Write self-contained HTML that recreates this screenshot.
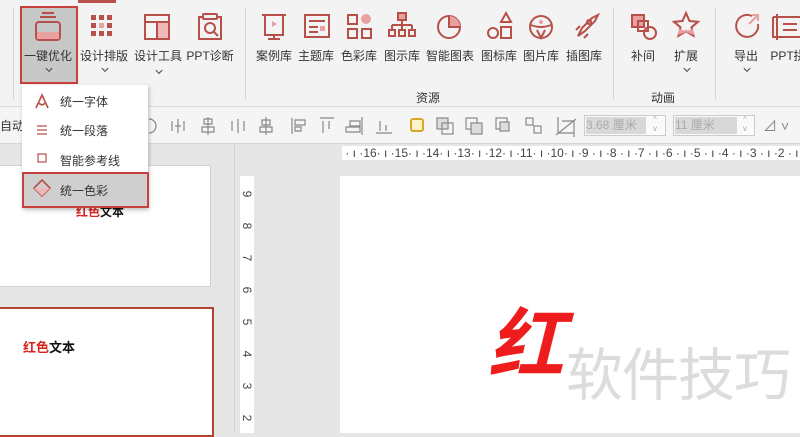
<!DOCTYPE html>
<html><head><meta charset="utf-8"><style>
*{margin:0;padding:0;box-sizing:border-box}
body{width:800px;height:433px;overflow:hidden;position:relative;background:#e6e6e6;font-family:"Liberation Sans","Noto Sans CJK SC",sans-serif;color:#333}
.a{position:absolute}
.lbl{position:absolute;font-size:12px;white-space:nowrap;transform:translateX(-50%);top:47px;color:#333}
.chev{position:absolute;width:5px;height:5px;border-right:1.3px solid #444;border-bottom:1.3px solid #444;transform:translateX(-50%) rotate(45deg);top:66px}
.sep{position:absolute;width:1px;background:#d6d6d6;top:8px;height:92px}
</style></head><body>
<!-- ribbon -->
<div class="a" style="left:0;top:0;width:800px;height:107px;background:#f3f3f3;border-bottom:1px solid #dcdcdc"></div>
<div class="a" style="left:78px;top:0;width:38px;height:3px;background:#b8504a"></div>
<div class="sep" style="left:13px"></div>
<div class="a" style="left:20px;top:6px;width:58px;height:78px;background:#c8c8c8;border:2px solid #c9403c"></div>
<div class="sep" style="left:245px"></div>
<div class="sep" style="left:613px"></div>
<div class="sep" style="left:715px"></div>

<svg class="a" style="left:0;top:0" width="800" height="107" fill="none" stroke="#b8504a" stroke-width="2">
<rect x="36" y="22" width="24" height="18" rx="3"/><line x1="40" y1="17" x2="56" y2="17"/><line x1="42" y1="13" x2="54" y2="13"/><rect x="37" y="32" width="22" height="7" fill="#e8a0a0" stroke="none"/>
<g fill="#b8504a" stroke="none"><rect x="91" y="15" width="5" height="5"/><rect x="99" y="15" width="5" height="5"/><rect x="107" y="15" width="5" height="5"/><rect x="91" y="23" width="5" height="5"/><rect x="99" y="23" width="5" height="5" fill="#e8a0a0"/><rect x="107" y="23" width="5" height="5"/><rect x="91" y="31" width="5" height="5"/><rect x="99" y="31" width="5" height="5"/><rect x="107" y="31" width="5" height="5"/></g>
<rect x="145" y="15" width="24" height="24"/><line x1="145" y1="22" x2="169" y2="22"/><line x1="157" y1="22" x2="157" y2="39"/><rect x="158" y="23" width="10" height="15" fill="#f0b8b8" stroke="none"/>
<path d="M202 17h-3v22h22v-22h-3"/><rect x="203" y="14" width="14" height="5" rx="1"/><circle cx="210" cy="28" r="5"/><line x1="214" y1="32" x2="218" y2="36"/>
<path d="M262 15h24M265 15v20h18v-20M274 35v4M268 39h12"/><path d="M272 21l5 3-5 3z" fill="#e8a0a0" stroke="none"/>
<rect x="305" y="15" width="24" height="22"/><line x1="309" y1="21" x2="325" y2="21"/><line x1="309" y1="27" x2="318" y2="27"/><line x1="309" y1="32" x2="318" y2="32"/><rect x="320" y="26" width="5" height="5" fill="#e8a0a0" stroke="none"/>
<rect x="348" y="15" width="9" height="9"/><circle cx="366" cy="19" r="5" fill="#e8a0a0" stroke="none"/><rect x="348" y="29" width="9" height="9"/><rect x="362" y="29" width="9" height="9"/>
<rect x="398" y="13" width="8" height="7" fill="#e8a0a0"/><path d="M402 20v5M392 25h20M392 25v4M412 25v4M402 25v4"/><rect x="389" y="30" width="6" height="6"/><rect x="399" y="30" width="6" height="6"/><rect x="409" y="30" width="6" height="6"/>
<circle cx="449" cy="27" r="11"/><path d="M449 16v11h11" /><path d="M450 16a11 11 0 0 1 10 10h-10z" fill="#e8a0a0" stroke="none"/>
<circle cx="493" cy="33" r="5"/><rect x="501" y="27" width="10" height="11"/><path d="M506 13l5 9h-10z"/>
<circle cx="541" cy="27" r="11"/><path d="M531 25q10 4 20 0M537 30l4 8 4-8"/><circle cx="541" cy="22" r="2" fill="#e8a0a0" stroke="none"/>
<path d="M578 36l4-8 10-10 6-3-3 6-10 10zM576 30l4-4M584 38l4-4"/><circle cx="589" cy="22" r="2"/>
<rect x="632" y="15" width="12" height="12" fill="#e8a0a0"/><rect x="638" y="21" width="10" height="10"/><circle cx="650" cy="33" r="6"/>
<path d="M686 13l3.5 8 8.5 .8-6.5 5.5 2 8.5-7.5-4.5-7.5 4.5 2-8.5-6.5-5.5 8.5-.8z"/><path d="M679 29l7 2 7-2 1 6-8-3-8 3z" fill="#e8a0a0" stroke="none"/>
<path d="M752 16a11 11 0 1 0 6 8"/><path d="M749 24l9-9M752 15h6v6" stroke="#e8a0a0"/>
<path d="M773 17h30M773 17v20h30M777 14v26M783 24h14M783 30h14"/>
</svg>

<div class="lbl" style="left:48px">一键优化</div><div class="chev" style="left:49px"></div>
<div class="lbl" style="left:104px">设计排版</div><div class="chev" style="left:105px"></div>
<div class="lbl" style="left:158px">设计工具</div><div class="chev" style="left:159px;top:68px"></div>
<div class="lbl" style="left:210px">PPT诊断</div>
<div class="lbl" style="left:274px">案例库</div>
<div class="lbl" style="left:316px">主题库</div>
<div class="lbl" style="left:359px">色彩库</div>
<div class="lbl" style="left:402px">图示库</div>
<div class="lbl" style="left:450px">智能图表</div>
<div class="lbl" style="left:499px">图标库</div>
<div class="lbl" style="left:541px">图片库</div>
<div class="lbl" style="left:584px">插图库</div>
<div class="lbl" style="left:643px">补间</div>
<div class="lbl" style="left:686px">扩展</div><div class="chev" style="left:687px"></div>
<div class="lbl" style="left:746px">导出</div><div class="chev" style="left:747px"></div>
<div class="lbl" style="left:788px">PPT拼</div>
<div class="a" style="left:416px;top:89px;font-size:12px">资源</div>
<div class="a" style="left:651px;top:89px;font-size:12px">动画</div>

<!-- toolbar row -->
<div class="a" style="left:0;top:107px;width:800px;height:37px;background:#f5f5f5;border-bottom:1px solid #d8d8d8"></div>
<div class="a" style="left:0;top:117px;font-size:12px">自动化</div>
<svg class="a" style="left:140px;top:113px" width="660" height="26" fill="none" stroke="#888" stroke-width="1.2">
<path d="M9 6a7 7 0 0 1 0 14"/>
<path d="M32 8v10M38 6v14M44 8v10M35 13h6"/>
<path d="M64 6h8v5h-8zM62 14h12v5h-12zM68 4v18"/>
<path d="M92 8v10M98 6v14M104 8v10"/>
<path d="M122 7h8v5h-8zM120 14h12v5h-12zM126 4v18"/>
<path d="M152 5v16M155 7h10v5h-10zM155 14h6v4h-6z"/>
<path d="M180 5h14M183 8v12M189 8v8"/>
<path d="M210 8h10v5h-10zM206 14h14v5h-14zM222 4v18"/>
<path d="M236 20h16M240 8v10M246 12v6"/>
<rect x="271" y="6" width="12" height="12" rx="2" stroke="#d9a52a" stroke-width="2" fill="#fff3c8"/>
<rect x="297" y="5" width="11" height="11" fill="#ddd"/><rect x="302" y="10" width="11" height="11"/>
<rect x="326" y="5" width="11" height="11"/><rect x="331" y="10" width="11" height="11" fill="#ddd"/>
<rect x="356" y="5" width="11" height="11"/><rect x="360" y="9" width="9" height="9" fill="#ddd"/>
<rect x="386" y="5" width="7" height="7"/><rect x="394" y="13" width="7" height="7"/>
<path d="M418 4v16h16M422 8h12v16M416 22l20-16"/>
</svg>
<div class="a" style="left:584px;top:115px;width:82px;height:21px;border:1px solid #ccc;background:#fafafa"></div>
<div class="a" style="left:586px;top:117px;width:60px;height:17px;background:#d8d8d8;font-size:12px;color:#aaa;line-height:17px">3.68 厘米</div>
<div class="a" style="left:673px;top:115px;width:82px;height:21px;border:1px solid #ccc;background:#fafafa"></div>
<div class="a" style="left:675px;top:117px;width:62px;height:17px;background:#d8d8d8;font-size:12px;color:#aaa;line-height:17px">11 厘米</div>
<div class="a" style="left:653px;top:115px;font-size:8px;color:#aaa;line-height:9px">^<br>v</div>
<div class="a" style="left:743px;top:115px;font-size:8px;color:#aaa;line-height:9px">^<br>v</div>
<div class="a" style="left:763px;top:116px;font-size:14px;color:#888">⊿ ˅</div>

<!-- left panel thumbnails -->
<div class="a" style="left:0;top:165px;width:211px;height:122px;background:#fff;border:1px solid #d0d0d0;border-left:none"></div>
<div class="a" style="left:76px;top:203px;font-size:12px;font-weight:bold;color:#111"><span style="color:#d8231e">红色</span>文本</div>
<div class="a" style="left:0;top:307px;width:214px;height:130px;background:#fff;border:2px solid #b5432f;border-left:none"></div>
<div class="a" style="left:23px;top:337px;font-size:13px;font-weight:bold;color:#111"><span style="color:#d8231e">红色</span>文本</div>
<div class="a" style="left:234px;top:144px;width:1px;height:289px;background:#d4d4d4"></div>

<!-- rulers -->
<div class="a" style="left:342px;top:146px;width:458px;height:14px;background:#fff;font-size:12px;line-height:14px;color:#444;white-space:nowrap">
&nbsp;· ı ·16· ı ·15· ı ·14· ı ·13· ı ·12· ı ·11· ı ·10· ı ·9 · ı ·8 · ı ·7 · ı ·6 · ı ·5 · ı ·4 · ı ·3 · ı ·2 · ı</div>
<div class="a" style="left:240px;top:176px;width:14px;height:257px;background:#fff"></div>
<div class="a" style="left:241px;top:178px;width:12px;font-size:12px;color:#444;line-height:32px;text-align:center">
<div style="transform:rotate(90deg)">9</div><div style="transform:rotate(90deg)">8</div><div style="transform:rotate(90deg)">7</div><div style="transform:rotate(90deg)">6</div><div style="transform:rotate(90deg)">5</div><div style="transform:rotate(90deg)">4</div><div style="transform:rotate(90deg)">3</div><div style="transform:rotate(90deg)">2</div></div>

<!-- slide -->
<div class="a" style="left:340px;top:176px;width:460px;height:257px;background:#fff"></div>
<div class="a" style="left:488px;top:296px;font-size:76px;font-weight:bold;font-style:italic;color:#ee1c1c;line-height:100px">红</div>
<div class="a" style="left:566px;top:336px;font-size:57px;color:#dcdcdc;line-height:80px;letter-spacing:-1px">软件技巧</div>

<!-- dropdown menu -->
<div class="a" style="left:22px;top:85px;width:126px;height:123px;background:#fff;box-shadow:1px 2px 4px rgba(0,0,0,.25)"></div>
<div class="a" style="left:22px;top:172px;width:127px;height:36px;background:#cfcfcf;border:2px solid #c9403c"></div>
<svg class="a" style="left:30px;top:90px" width="24" height="112" fill="none" stroke="#b8504a" stroke-width="1.6">
<path d="M6 18l6-13 6 13M8 13l4 2 4-2"/>
<path d="M7 36h10M7 40h10M7 44h10" stroke-width="1.2"/>
<rect x="8" y="64" width="8" height="8" stroke-width="1.2"/>
<path d="M12 90l8 8-8 8-8-8z"/><path d="M4 98h16l-8 8z" fill="#f0b8b8" stroke="none"/>
</svg>
<div class="a" style="left:60px;top:93px;font-size:12px">统一字体</div>
<div class="a" style="left:60px;top:122px;font-size:12px">统一段落</div>
<div class="a" style="left:60px;top:152px;font-size:12px">智能参考线</div>
<div class="a" style="left:60px;top:182px;font-size:12px">统一色彩</div>
</body></html>
